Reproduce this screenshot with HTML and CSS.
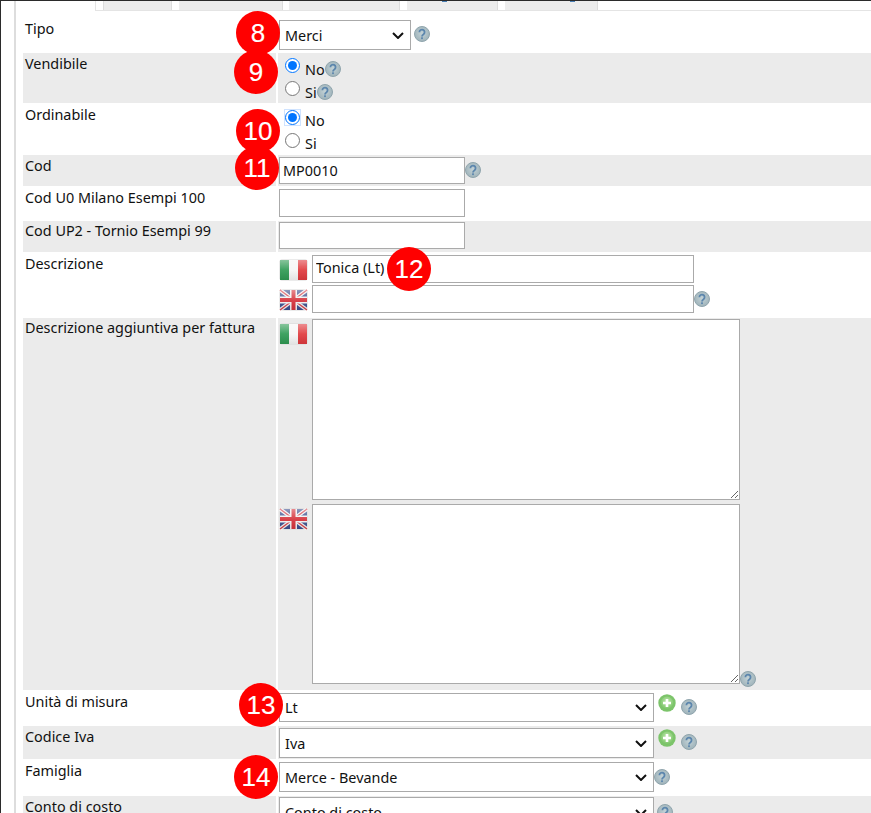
FILE: index.html
```html
<!DOCTYPE html>
<html lang="it">
<head>
<meta charset="utf-8">
<title>Articolo</title>
<link rel="stylesheet" href="styles.css">
</head>
<body>
<svg class="defs" width="0" height="0" aria-hidden="true">
  <defs>
    <radialGradient id="helpFill" cx="50%" cy="45%" r="55%">
      <stop offset="0" stop-color="#c3d2d6"/>
      <stop offset="1" stop-color="#9fb3ba"/>
    </radialGradient>
    <radialGradient id="plusFill" cx="50%" cy="40%" r="62%">
      <stop offset="0" stop-color="#c4ebb2"/>
      <stop offset="1" stop-color="#74c061"/>
    </radialGradient>
    <linearGradient id="gloss" x1="0" y1="0" x2="0" y2="1">
      <stop offset="0" stop-color="#fff" stop-opacity=".42"/>
      <stop offset=".5" stop-color="#fff" stop-opacity=".08"/>
      <stop offset="1" stop-color="#000" stop-opacity=".08"/>
    </linearGradient>
    <filter id="soft" x="-5%" y="-5%" width="110%" height="110%">
      <feGaussianBlur stdDeviation=".35"/>
    </filter>
    <symbol id="help" viewBox="0 0 16 16">
      <circle cx="8" cy="8" r="7.5" fill="url(#helpFill)" stroke="#90a5ad"/>
      <path d="M5.4 6.3a2.6 2.6 0 1 1 4.2 2c-1 .7-1.6 1.1-1.6 2.2" fill="none" stroke="#5c86ad" stroke-width="1.8"/>
      <rect x="7.1" y="11.3" width="1.8" height="1.8" fill="#5c86ad"/>
    </symbol>
    <symbol id="plus" viewBox="0 0 18 18">
      <circle cx="9" cy="9" r="8.7" fill="#7cc46a"/>
      <circle cx="9" cy="9" r="6.4" fill="url(#plusFill)"/>
      <path d="M9 5v8M5 9h8" stroke="#fff" stroke-width="2.6"/>
    </symbol>
    <symbol id="flag-it" viewBox="0 0 29 22">
      <g filter="url(#soft)">
        <rect x=".5" y=".5" width="28" height="21" rx="2" fill="#d8d8d8"/>
        <rect x="1" y="1" width="9" height="20" fill="#2f9a54"/>
        <rect x="10" y="1" width="9" height="20" fill="#f6f6f6"/>
        <rect x="19" y="1" width="9" height="20" fill="#e03a3e"/>
        <rect x="1" y="1" width="27" height="20" fill="url(#gloss)"/>
      </g>
    </symbol>
    <symbol id="flag-uk" viewBox="0 0 29 22">
      <g filter="url(#soft)">
        <rect x=".5" y=".5" width="28" height="21" rx="2" fill="#d8d8d8"/>
        <rect x="1" y="1" width="27" height="20" fill="#3c4f8e"/>
        <path d="M1 1l27 20M28 1L1 21" stroke="#f2f2f2" stroke-width="4"/>
        <path d="M1 1l27 20M28 1L1 21" stroke="#d6404a" stroke-width="1.4"/>
        <path d="M14.5 1v20M1 11h27" stroke="#f2f2f2" stroke-width="7"/>
        <path d="M14.5 1v20M1 11h27" stroke="#d6333c" stroke-width="4"/>
        <rect x="1" y="1" width="27" height="20" fill="url(#gloss)"/>
      </g>
    </symbol>
  </defs>
</svg>

<div class="frame">
  <div class="panel">
    <div class="tabs">
      <span class="tab t1"></span>
      <span class="tab t2"></span>
      <span class="tab t3"></span>
      <span class="tab t4"><i class="descender"></i></span>
      <span class="tab t5"><i class="descender"></i></span>
    </div>

    <div class="form">
      <div class="row r-tipo">
        <div class="label">Tipo</div>
        <div class="value">
          <select class="sel sel-short"><option>Merci</option></select>
          <svg class="help help-tipo"><use href="#help"/></svg>
        </div>
      </div>

      <div class="row alt r-radio r-vend">
        <div class="label">Vendibile</div>
        <div class="value stack">
          <label class="opt"><input type="radio" name="vend" checked><span>No</span><svg class="help help-inline"><use href="#help"/></svg></label>
          <label class="opt"><input type="radio" name="vend"><span>Si</span><svg class="help help-inline"><use href="#help"/></svg></label>
        </div>
      </div>

      <div class="row r-radio r-ord">
        <div class="label">Ordinabile</div>
        <div class="value stack">
          <label class="opt"><input class="focused" type="radio" name="ord" checked><span>No</span></label>
          <label class="opt"><input type="radio" name="ord"><span>Si</span></label>
        </div>
      </div>

      <div class="row alt r-cod">
        <div class="label">Cod</div>
        <div class="value">
          <input class="txt txt-code" type="text" value="MP0010">
          <svg class="help help-cod"><use href="#help"/></svg>
        </div>
      </div>

      <div class="row r-u0">
        <div class="label">Cod U0 Milano Esempi 100</div>
        <div class="value"><input class="txt txt-code" type="text"></div>
      </div>

      <div class="row alt r-up2">
        <div class="label">Cod UP2 - Tornio Esempi 99</div>
        <div class="value"><input class="txt txt-code" type="text"></div>
      </div>

      <div class="row r-descr">
        <div class="label">Descrizione</div>
        <div class="value stack tight">
          <div class="lang">
            <svg class="flag"><use href="#flag-it"/></svg>
            <input class="txt txt-lang" type="text" value="Tonica (Lt)">
          </div>
          <div class="lang">
            <svg class="flag"><use href="#flag-uk"/></svg>
            <input class="txt txt-lang" type="text">
            <svg class="help help-lang"><use href="#help"/></svg>
          </div>
        </div>
      </div>

      <div class="row alt r-agg">
        <div class="label">Descrizione aggiuntiva per fattura</div>
        <div class="value stack wide">
          <div class="lang">
            <svg class="flag flag-area"><use href="#flag-it"/></svg>
            <textarea class="area area-1"></textarea>
          </div>
          <div class="lang">
            <svg class="flag flag-area"><use href="#flag-uk"/></svg>
            <textarea class="area area-2"></textarea>
            <svg class="help help-area"><use href="#help"/></svg>
          </div>
        </div>
      </div>

      <div class="row r-um">
        <div class="label">Unità di misura</div>
        <div class="value">
          <select class="sel sel-long h29"><option>Lt</option></select>
          <svg class="plus"><use href="#plus"/></svg>
          <svg class="help help-plus"><use href="#help"/></svg>
        </div>
      </div>

      <div class="row alt r-iva">
        <div class="label">Codice Iva</div>
        <div class="value">
          <select class="sel sel-long"><option>Iva</option></select>
          <svg class="plus"><use href="#plus"/></svg>
          <svg class="help help-plus"><use href="#help"/></svg>
        </div>
      </div>

      <div class="row r-fam">
        <div class="label">Famiglia</div>
        <div class="value">
          <select class="sel sel-long"><option>Merce - Bevande</option></select>
          <svg class="help help-fam"><use href="#help"/></svg>
        </div>
      </div>

      <div class="row alt r-conto">
        <div class="label">Conto di costo</div>
        <div class="value">
          <select class="sel sel-long"><option>Conto di costo</option></select>
          <svg class="help help-conto"><use href="#help"/></svg>
        </div>
      </div>
    </div>
  </div>

  <span class="badge b8">8</span>
  <span class="badge b9">9</span>
  <span class="badge b10">10</span>
  <span class="badge b11">11</span>
  <span class="badge b12">12</span>
  <span class="badge b13">13</span>
  <span class="badge b14">14</span>
</div>
</body>
</html>
```

FILE: styles.css
```css
* { box-sizing: border-box; }
html, body { margin: 0; padding: 0; height: 100%; overflow: hidden; background: #fff; }
body { font-family: "Noto Sans", "Open Sans", sans-serif; font-size: 14.4px; color: #111; }
.defs { position: absolute; }

.frame {
  position: relative;
  height: 813px;
  overflow: hidden;
  border-top: 1px solid #2b2b2b;
  border-left: 1px solid #2b2b2b;
}
.panel {
  margin-left: 13px;
  border-left: 2px solid #ddd;
  padding-left: 7px;
  min-height: 100%;
}

/* clipped tab strip */
.tabs {
  display: flex;
  height: 10px;
  margin-left: 72px;
  padding-left: 7px;
  gap: 7px;
  border-left: 1px solid #e4e4e4;
  border-bottom: 1px solid #e4e4e4;
}
.tab {
  display: block;
  height: 9px;
  background: #ededed;
  border-right: 1px solid #ddd;
  position: relative;
}
.t1 { width: 69px; border-left: 1px solid #ddd; }
.t2 { width: 104px; }
.t3 { width: 111px; margin-left: -1px; }
.t4 { width: 91px; }
.t5 { width: 93px; }
.descender { position: absolute; top: 0; left: 35px; width: 5px; height: 1px; background: #4a80b5; }
.t5 .descender { left: 65px; }

/* rows */
.row {
  display: grid;
  grid-template-columns: 253px 1fr;
  column-gap: 2px;
}
.row.alt .label, .row.alt .value { background: #ebebeb; }
.label { padding: 8px 0 0 2px; line-height: 20px; }
.value { display: flex; align-items: flex-start; padding-left: 1px; }
.stack { flex-direction: column; }

.r-tipo .value { padding-top: 9px; padding-bottom: 3px; }
.r-tipo .label { padding-top: 8px; }
.r-vend .value { height: 50px; }
.r-vend .label { padding-top: 1px; }
.r-ord .value { height: 52px; }
.r-ord .label { padding-top: 2px; }
.r-cod .value { padding-top: 2px; padding-bottom: 2px; }
.r-cod .label { padding-top: 1px; }
.r-u0 .value { padding-top: 3px; padding-bottom: 4px; }
.r-u0 .label { padding-top: 2px; }
.r-u0 .txt { height: 28px; }
.r-up2 .value { padding-top: 1px; padding-bottom: 3px; }
.r-up2 .label { padding-top: 0; }
.r-descr .value { padding-top: 3px; padding-bottom: 5px; gap: 2px; }
.r-descr .label { padding-top: 2px; }
.r-agg .value { padding-top: 1px; padding-bottom: 6px; gap: 4px; }
.r-agg .label { padding-top: 0; }
.r-um .value { padding-top: 3px; padding-bottom: 4px; }
.r-um .label { padding-top: 2px; }
.r-iva .value { padding-top: 2px; padding-bottom: 1px; }
.r-iva .label { padding-top: 1px; }
.r-fam .value { padding-top: 3px; padding-bottom: 4px; }
.r-fam .label { padding-top: 2px; }
.r-conto .value { padding-top: 1px; }
.r-conto .label { padding-top: 1px; }

/* controls */
.sel, .txt, .area {
  font-family: "Noto Sans", "Open Sans", sans-serif;
  font-size: 14.4px;
  color: #111;
  background-color: #fff;
  border: 1px solid #aaa;
  border-radius: 0;
  margin: 0;
  outline: none;
}
.sel {
  height: 30px;
  padding: 0 24px 0 5px;
  appearance: none;
  background-image: url("data:image/svg+xml,%3Csvg xmlns='http://www.w3.org/2000/svg' width='12' height='7'%3E%3Cpath d='M1 1l5 5 5-5' fill='none' stroke='%23111' stroke-width='2'/%3E%3C/svg%3E");
  background-repeat: no-repeat;
  background-position: right 6px center;
}
.h29 { height: 29px; }
.sel-short { width: 132px; }
.sel-long { width: 375px; }
.txt { height: 27px; padding: 0 3px; }
.txt-code { width: 186px; }
.txt-lang { width: 382px; height: 28px; padding-bottom: 3px; }
.area { display: block; width: 428px; padding: 2px; }
.area-1 { height: 181px; }
.area-2 { height: 180px; }

/* radios */
.opt { display: flex; align-items: flex-start; height: 23px; }
.opt input { width: 15px; height: 15px; margin: 0 5px 0 6px; flex: none; accent-color: #0075ff; }
.opt span { line-height: 20px; margin-top: 2px; }
.r-ord .opt span { margin-top: 1px; }
.r-vend .stack { padding-top: 5px; }
.r-ord .stack { padding-top: 7px; }
.focused { box-shadow: 0 0 0 1px #cfe3ff; border-radius: 2px; }

/* lang rows */
.lang { display: flex; align-items: flex-start; }
.flag { width: 29px; height: 22px; margin: 4px 4px 0 0; flex: none; }
.flag-area { margin-top: 4px; }

/* icons */
.help { width: 16px; height: 16px; flex: none; }
.plus { width: 18px; height: 18px; flex: none; margin-left: 4px; margin-top: 1px; }
.help-tipo { margin: 6px 0 0 3px; }
.help-inline { margin-top: 3px; }
.help-cod { margin: 5px 0 0 0; }
.help-lang { margin: 6px 0 0 0; }
.help-area { margin: 167px 0 -3px 0; }
.help-plus { margin: 6px 0 0 5px; }
.help-fam { margin: 7px 0 0 0; }
.help-conto { margin: 7px 0 0 3px; }

/* red annotation badges */
.badge {
  position: absolute;
  width: 44px;
  height: 44px;
  border-radius: 50%;
  background: #f00;
  color: #fff;
  font-family: "Liberation Sans", Arial, sans-serif;
  font-size: 26px;
  line-height: 44px;
  text-align: center;
  -webkit-text-stroke: .15px #fff;
}
.b8  { left: 235px; top: 10px; }
.b9  { left: 233px; top: 49px; }
.b10 { left: 235px; top: 108px; }
.b11 { left: 234px; top: 145px; }
.b12 { left: 386px; top: 246px; }
.b13 { left: 238px; top: 682px; }
.b14 { left: 233px; top: 754px; }
```
